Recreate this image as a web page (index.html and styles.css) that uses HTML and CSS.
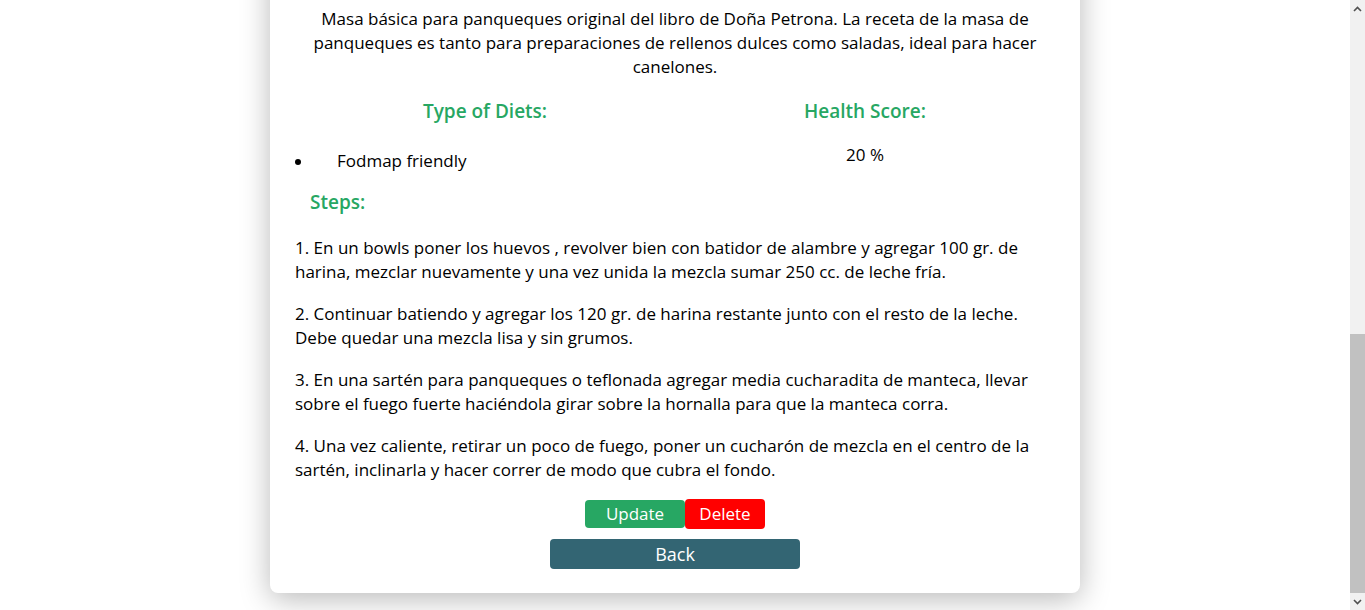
FILE: index.html
```html
<!DOCTYPE html>
<html lang="es">
<head>
<meta charset="utf-8">
<title>Receta</title>
<link rel="stylesheet" href="styles.css">
</head>
<body>
<div class="viewport">
  <div class="card">
    <p class="summary">Masa básica para panqueques original del libro de Doña Petrona. La receta de la masa de panqueques es tanto para preparaciones de rellenos dulces como saladas, ideal para hacer canelones.</p>
    <div class="info">
      <div class="info-col">
        <h3 class="label">Type of Diets:</h3>
        <ul class="diets">
          <li>Fodmap friendly</li>
        </ul>
      </div>
      <div class="info-col">
        <h3 class="label">Health Score:</h3>
        <p class="score">20 %</p>
      </div>
    </div>
    <h3 class="label steps-title">Steps:</h3>
    <div class="steps">
      <p>1. En un bowls poner los huevos , revolver bien con batidor de alambre y agregar 100 gr. de harina, mezclar nuevamente y una vez unida la mezcla sumar 250 cc. de leche fría.</p>
      <p>2. Continuar batiendo y agregar los 120 gr. de harina restante junto con el resto de la leche. Debe quedar una mezcla lisa y sin grumos.</p>
      <p>3. En una sartén para panqueques o teflonada agregar media cucharadita de manteca, llevar sobre el fuego fuerte haciéndola girar sobre la hornalla para que la manteca corra.</p>
      <p>4. Una vez caliente, retirar un poco de fuego, poner un cucharón de mezcla en el centro de la sartén, inclinarla y hacer correr de modo que cubra el fondo.</p>
    </div>
    <div class="actions">
      <button class="btn btn-update">Update</button>
      <button class="btn btn-delete">Delete</button>
    </div>
    <div class="back-row">
      <button class="btn btn-back">Back</button>
    </div>
  </div>
</div>
<div class="scrollbar">
  <div class="sb-arrow sb-up"><svg width="9" height="6" viewBox="0 0 9 6"><path d="M1 5 L4.5 1.5 L8 5" fill="none" stroke="#505050" stroke-width="1.6"/></svg></div>
  <div class="sb-track"><div class="sb-thumb"></div></div>
  <div class="sb-arrow sb-down"><svg width="9" height="6" viewBox="0 0 9 6"><path d="M1 1 L4.5 4.5 L8 1" fill="none" stroke="#505050" stroke-width="1.6"/></svg></div>
</div>
</body>
</html>
```
FILE: styles.css
```css
* { box-sizing: border-box; }
html, body { margin: 0; padding: 0; height: 610px; overflow: hidden; background: #fff; }
body {
  font-family: "Open Sans", "Noto Sans", sans-serif;
  color: #000;
}
.viewport {
  width: 1350px;
  height: 610px;
  overflow: hidden;
  display: flex;
  flex-direction: column;
  justify-content: flex-end;
  align-items: center;
  padding-bottom: 17px;
}
.card {
  flex-shrink: 0;
  width: 810px;
  background: #fff;
  border-radius: 8px;
  box-shadow: 0 6px 30px rgba(0,0,0,0.28);
  padding: 60px 25px 24px;
  font-size: 17px;
  line-height: 24px;
}
.summary {
  text-align: center;
  margin: 0;
}
.info {
  display: grid;
  grid-template-columns: 1fr 1fr;
  margin-top: 18px;
}
.info-col { text-align: center; }
.label {
  color: #27a763;
  font-size: 19px;
  line-height: 28px;
  font-weight: 600;
  margin: 0;
}
.diets {
  list-style: none;
  margin: 24px 0 0;
  padding: 0;
  text-align: left;
}
.diets li { display: flex; align-items: center; }
.diets li::before {
  content: "";
  width: 6px;
  height: 6px;
  border-radius: 50%;
  background: #000;
  flex-shrink: 0;
  margin: 1px 36px 0 0;
}
.score { margin: 18px 0 0; }
.steps-title {
  margin: 15px 0 0 15px;
}
.steps p { margin: 20px 0 0; }
.steps p + p { margin-top: 18px; }
.actions {
  display: flex;
  justify-content: center;
  align-items: center;
  margin-top: 17px;
}
.btn {
  font-family: inherit;
  font-size: 17px;
  color: #fff;
  border: none;
  border-radius: 4px;
  padding: 0;
  line-height: 24px;
}
.btn-update { background: #27a763; width: 100px; height: 28px; }
.btn-delete { background: #ff0000; width: 80px; height: 30px; }
.back-row { display: flex; justify-content: center; margin-top: 10px; }
.btn-back { background: #336573; width: 250px; height: 30px; font-size: 18px; }
.scrollbar {
  position: fixed;
  top: 0;
  right: 0;
  width: 15px;
  height: 610px;
  background: #f1f1f1;
  display: flex;
  flex-direction: column;
}
.sb-arrow { height: 17px; display: flex; align-items: center; justify-content: center; }
.sb-track { flex: 1; position: relative; }
.sb-thumb { position: absolute; left: 0; right: 0; top: 317px; bottom: 0; background: #c1c1c1; }
```
